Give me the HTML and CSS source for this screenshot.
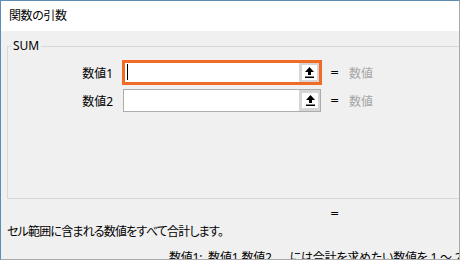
FILE: index.html
```html
<!DOCTYPE html>
<html lang="ja">
<head>
<meta charset="utf-8">
<link rel="stylesheet" href="styles.css">
</head>
<body>
<div class="window">
  <div class="titlebar">関数の引数</div>
  <div class="content">
    <div class="group">
      <span class="legend">SUM</span>
      <div class="rows">
        <div class="row">
          <span class="label">数値1</span>
          <div class="field focused">
            <span class="caret"></span>
            <span class="btn"><svg width="9" height="11" viewBox="0 0 9 11"><path d="M4.5 0 L9 5 L6 5 L6 8 L3 8 L3 5 L0 5 Z" fill="#000"/><rect x="0" y="9.5" width="9" height="1.5" fill="#000"/></svg></span>
          </div>
          <span class="eq">=</span>
          <span class="val">数値</span>
        </div>
        <div class="row">
          <span class="label">数値2</span>
          <div class="field">
            <span class="btn"><svg width="9" height="11" viewBox="0 0 9 11"><path d="M4.5 0 L9 5 L6 5 L6 8 L3 8 L3 5 L0 5 Z" fill="#000"/><rect x="0" y="9.5" width="9" height="1.5" fill="#000"/></svg></span>
          </div>
          <span class="eq">=</span>
          <span class="val">数値</span>
        </div>
      </div>
    </div>
    <div class="result"><span class="eq">=</span></div>
    <p class="desc">セル範囲に含まれる数値をすべて合計します。</p>
    <p class="detail">数値1:&nbsp;&nbsp;数値1,数値2,...&nbsp;&nbsp;には合計を求めたい数値を 1 ～ 255 個まで指定できます。</p>
  </div>
</div>
</body>
</html>
```

FILE: styles.css
```css
* { box-sizing: border-box; }
html, body { margin: 0; padding: 0; background: #f0f0f0; }
body {
  font-family: "Noto Sans", "Noto Sans CJK JP", sans-serif;
  font-size: 12px;
  color: #000;
  font-feature-settings: "palt";
}
.window {
  width: 460px;
  height: 260px;
  overflow: hidden;
  border-top: 1px solid #5a8cb4;
  border-left: 1px solid #5a8cb4;
  border-right: 1px solid #a9a9a9;
  border-bottom: 1px solid #a9a9a9;
  background: #f0f0f0;
  display: flex;
  flex-direction: column;
}
.titlebar {
  height: 30px;
  line-height: 30px;
  padding-left: 8px;
  background: #fff;
  flex: none;
  letter-spacing: -0.4px;
}
.content {
  flex: 1;
  padding-left: 6px;
  background: #f0f0f0;
  white-space: nowrap;
}
.group {
  position: relative;
  margin-top: 15px;
  height: 153px;
  width: 470px;
  border: 1px solid #d9d9d9;
}
.legend {
  position: absolute;
  top: -9px;
  left: 3px;
  padding: 0 2px;
  line-height: 16px;
  background: #f0f0f0;
}
.rows {
  padding-top: 13px;
  display: flex;
  flex-direction: column;
  gap: 3px;
}
.row {
  display: flex;
  align-items: center;
  height: 25px;
}
.label {
  width: 105px;
  text-align: right;
  margin-right: 9px;
}
.field {
  width: 198px;
  height: 23px;
  margin: 0 1px;
  border: 1px solid #adadad;
  background: #fff;
  display: flex;
  align-items: stretch;
  justify-content: flex-end;
  position: relative;
}
.field.focused {
  width: 200px;
  height: 25px;
  margin: 0;
  border: 3px solid #f26b24;
}
.caret {
  position: absolute;
  left: 2px;
  top: 1px;
  width: 1px;
  height: 16px;
  background: #000;
}
.btn {
  width: 21px;
  border: 3px solid #d6d6d6;
  border-right-width: 2px;
  background: #fff;
  display: flex;
  align-items: center;
  justify-content: center;
}
.field.focused .btn { width: 20px; border-width: 2px 2px 2px 3px; }
.eq {
  margin-left: 8px;
  width: 19px;
  font-family: "DejaVu Sans", sans-serif;
  font-size: 11px;
  color: #000;
}
.val {
  color: #a6a6a6;
}
.result {
  height: 16px;
  line-height: 16px;
  margin-top: 6px;
  padding-left: 315px;
}
.desc {
  margin: 3px 0 0;
  line-height: 16px;
  letter-spacing: -0.8px;
}
.detail {
  margin: 10px 0 0;
  padding-left: 162px;
  line-height: 16px;
  letter-spacing: -0.2px;
}
```
